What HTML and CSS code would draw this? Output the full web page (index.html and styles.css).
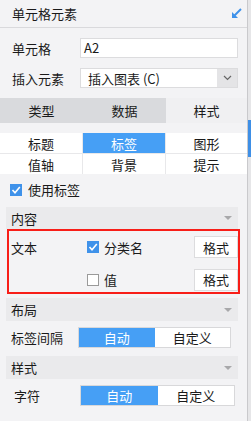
FILE: index.html
```html
<!DOCTYPE html>
<html lang="zh">
<head>
<meta charset="utf-8">
<link rel="stylesheet" href="styles.css">
</head>
<body>
<div class="wrap">
  <div class="panel">
    <div class="head">
      <span>单元格元素</span>
      <svg class="head-icon" width="11" height="11" viewBox="0 0 11 11">
        <path d="M10 1 L2 9" stroke="#3f92ea" stroke-width="2" fill="none"/>
        <path d="M1 4 L1 10 L7 10 Z" fill="#3f92ea"/>
      </svg>
    </div>

    <div class="form">
      <div class="frow">
        <span class="flabel">单元格</span>
        <div class="input">A2</div>
      </div>
      <div class="frow">
        <span class="flabel">插入元素</span>
        <div class="select">
          <span class="select-text">插入图表 (C)</span>
          <span class="select-btn">
            <svg width="9" height="6" viewBox="0 0 9 6"><path d="M1 1 L4.5 4.5 L8 1" stroke="#666" stroke-width="1.2" fill="none"/></svg>
          </span>
        </div>
      </div>
    </div>

    <div class="tabs">
      <div class="tab">类型</div>
      <div class="tab">数据</div>
      <div class="tab active">样式</div>
    </div>

    <div class="grid">
      <div class="cell">标题</div>
      <div class="cell sel">标签</div>
      <div class="cell">图形</div>
      <div class="cell">值轴</div>
      <div class="cell">背景</div>
      <div class="cell">提示</div>
    </div>

    <div class="check-row use">
      <span class="cb on"><svg width="12" height="12" viewBox="0 0 12 12"><path d="M2.5 6 L5 8.8 L9.8 3" stroke="#fff" stroke-width="1.6" fill="none"/></svg></span>
      <span>使用标签</span>
    </div>

    <div class="sec">
      <span>内容</span>
      <span class="tri"></span>
    </div>

    <div class="redbox">
      <div class="rrow">
        <span class="rlabel">文本</span>
        <span class="cb on"><svg width="12" height="12" viewBox="0 0 12 12"><path d="M2.5 6 L5 8.8 L9.8 3" stroke="#fff" stroke-width="1.6" fill="none"/></svg></span>
        <span class="rtext">分类名</span>
        <span class="fmt">格式</span>
      </div>
      <div class="rrow second">
        <span class="rlabel"></span>
        <span class="cb"></span>
        <span class="rtext">值</span>
        <span class="fmt">格式</span>
      </div>
    </div>

    <div class="sec sec2">
      <span>布局</span>
      <span class="tri"></span>
    </div>
    <div class="orow">
      <span class="olabel">标签间隔</span>
      <div class="seg seg1">
        <span class="seg-on">自动</span>
        <span class="seg-off">自定义</span>
      </div>
    </div>

    <div class="sec sec3">
      <span>样式</span>
      <span class="tri"></span>
    </div>
    <div class="orow">
      <span class="olabel olabel2">字符</span>
      <div class="seg seg2">
        <span class="seg-on">自动</span>
        <span class="seg-off">自定义</span>
      </div>
    </div>
  </div>
  <div class="strip"><div class="strip-blue"></div></div>
</div>
</body>
</html>
```

FILE: styles.css
```css
html, body {
  margin: 0;
  padding: 0;
  background: #f3f3f5;
}
body {
  width: 251px;
  height: 421px;
  overflow: hidden;
  font-family: "Noto Sans CJK SC", "Liberation Sans", sans-serif;
  font-size: 12px;
  color: #1a1a1a;
}
.wrap {
  display: flex;
  height: 421px;
}
.panel {
  width: 247px;
  flex: none;
  background: #f3f3f5;
}
.strip {
  width: 3px;
  flex: none;
  border-left: 1px solid #c9c9cc;
  background: #e6e6e8;
  padding-top: 120px;
}
.strip-blue {
  height: 37px;
  background: #3e8fe6;
}
.head {
  height: 27px;
  border-bottom: 1px solid #d9d9dc;
  display: flex;
  align-items: center;
  justify-content: space-between;
  padding: 0 5px 0 12px;
  font-size: 13px;
}
.head-icon { display: block; margin-top: -1px; }
.form {
  padding-top: 10px;
  display: flex;
  flex-direction: column;
  gap: 10px;
}
.frow {
  display: flex;
  align-items: center;
  height: 20px;
}
.flabel {
  width: 80px;
  padding-left: 12px;
  box-sizing: border-box;
  font-size: 13px;
}
.input {
  width: 158px;
  height: 20px;
  box-sizing: border-box;
  border: 1px solid #dcdcde;
  background: #fff;
  padding-left: 3px;
  line-height: 18px;
  font-size: 13px;
}
.select {
  width: 158px;
  height: 20px;
  box-sizing: border-box;
  border: 1px solid #dcdcde;
  background: #fff;
  display: flex;
  align-items: center;
}
.select-text {
  flex: 1;
  padding-left: 7px;
  font-size: 13px;
}
.select-btn {
  width: 20px;
  height: 18px;
  background: #e4e4e6;
  display: flex;
  align-items: center;
  justify-content: center;
}
.tabs {
  margin-top: 10px;
  height: 25px;
  display: grid;
  grid-template-columns: 83px 83px 81px;
}
.tab {
  background: #d9dadd;
  display: flex;
  align-items: center;
  justify-content: center;
  font-size: 13px;
}
.tab.active { background: #f0f0f2; }
.grid {
  margin-top: 10px;
  display: grid;
  grid-template-columns: 82px 82px 81px;
  grid-auto-rows: 20px;
  gap: 1px;
  background: #e8e8ea;
}
.cell {
  background: #fff;
  display: flex;
  align-items: center;
  justify-content: center;
  font-size: 13px;
}
.cell.sel { background: #469ff5; color: #fff; }
.check-row {
  display: flex;
  align-items: center;
  gap: 6px;
  font-size: 13px;
}
.use {
  margin-top: 9px;
  height: 13px;
  padding-left: 10px;
}
.cb {
  width: 12px;
  height: 12px;
  box-sizing: border-box;
  border: 1px solid #9a9a9a;
  background: #fff;
  flex: none;
  display: block;
}
.cb.on {
  border: none;
  background: #3f92ea;
}
.cb svg { display: block; }
.sec {
  margin: 11px 9px 0 6px;
  height: 22px;
  background: #eaeaec;
  display: flex;
  align-items: center;
  justify-content: space-between;
  padding: 0 6px 0 5px;
  font-size: 13px;
}
.tri {
  width: 0;
  height: 0;
  border-left: 4px solid transparent;
  border-right: 4px solid transparent;
  border-top: 4px solid #a8a8aa;
}
.redbox {
  margin: 0 7px 0 7px;
  border: 2px solid #f81e18;
  padding: 5px 0 2px 2px;
  display: flex;
  flex-direction: column;
  gap: 11px;
}
.rrow {
  display: flex;
  align-items: center;
  height: 22px;
  font-size: 13px;
}
.rlabel {
  width: 76px;
  flex: none;
}
.rtext {
  flex: 1;
  margin-left: 5px;
}
.fmt {
  width: 44px;
  height: 22px;
  box-sizing: border-box;
  border: 1px solid #dcdcde;
  background: #fff;
  display: flex;
  align-items: center;
  justify-content: center;
}
.rrow.second { height: 21px; }
.sec2 { margin-top: 4px; height: 23px; }
.sec3 { margin-top: 8px; height: 23px; }
.orow {
  display: flex;
  align-items: center;
  height: 21px;
  margin-top: 6px;
  font-size: 13px;
}
.olabel {
  width: 78px;
  padding-left: 11px;
  box-sizing: border-box;
}
.olabel2 {
  width: 80px;
  padding-left: 14px;
}
.seg {
  display: flex;
  height: 21px;
  box-sizing: border-box;
  border: 1px solid #d8d8da;
  background: #fff;
}
.seg1 { width: 153px; }
.seg2 { width: 155px; }
.seg-on, .seg-off {
  flex: 1;
  display: flex;
  align-items: center;
  justify-content: center;
}
.seg-on { background: #469ff5; color: #fff; }
```
